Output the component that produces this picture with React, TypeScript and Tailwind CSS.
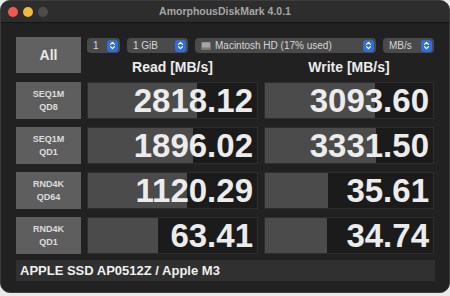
import React from 'react';

interface Result {
  label: [string, string];
  read: string;
  readFill: number;
  write: string;
  writeFill: number;
}

const results: Result[] = [
  { label: ['SEQ1M', 'QD8'], read: '2818.12', readFill: 109, write: '3093.60', writeFill: 110 },
  { label: ['SEQ1M', 'QD1'], read: '1896.02', readFill: 105, write: '3331.50', writeFill: 111 },
  { label: ['RND4K', 'QD64'], read: '1120.29', readFill: 99, write: '35.61', writeFill: 63 },
  { label: ['RND4K', 'QD1'], read: '63.41', readFill: 70, write: '34.74', writeFill: 62 },
];

const Chevrons: React.FC = () => (
  <span className="flex h-[12px] w-[11px] items-center justify-center rounded-[3px] bg-[#2f6ee0]">
    <svg width="7" height="9" viewBox="0 0 7 9" fill="none" stroke="#fff" strokeWidth="1.2" strokeLinecap="round" strokeLinejoin="round">
      <path d="M1.5 3.3 L3.5 1.3 L5.5 3.3" />
      <path d="M1.5 5.7 L3.5 7.7 L5.5 5.7" />
    </svg>
  </span>
);

const Select: React.FC<{ width: string; children: React.ReactNode }> = ({ width, children }) => (
  <div className={`flex h-[15px] ${width} items-center justify-between rounded-[4px] bg-[#4a4a4a] pl-[6px] pr-[2px] text-[10px] leading-none text-[#d6d6d6]`}>
    <span className="flex items-center gap-[4px]">{children}</span>
    <Chevrons />
  </div>
);

const DiskIcon: React.FC = () => (
  <svg width="10" height="10" viewBox="0 0 10 10">
    <rect x="0.5" y="1" width="9" height="8" rx="1" fill="#9a9a9a" />
    <rect x="0.5" y="6.5" width="9" height="2.5" rx="0.8" fill="#7a7a7a" />
    <path d="M2 2.5 V6 M3.5 2.5 V6 M5 2.5 V6 M6.5 2.5 V6 M8 2.5 V6" stroke="#b8b8b8" strokeWidth="0.6" />
  </svg>
);

const Cell: React.FC<{ value: string; fill: number }> = ({ value, fill }) => (
  <div className="relative h-[37px] border border-[#2e2e2e] bg-[#1b1b1b]">
    <div className="absolute inset-y-0 left-0 bg-[#4b4b4b]" style={{ width: fill }} />
    <div className="relative flex h-full items-center justify-end pr-[4px] text-[33px] font-bold leading-none text-[#ececec]">
      {value}
    </div>
  </div>
);

const App: React.FC = () => {
  return (
    <div className="h-[296px] w-[450px] bg-[#e9e9e9]" style={{ fontFamily: '"Liberation Sans", Arial, sans-serif' }}>
      <div className="flex h-[293px] w-[450px] flex-col overflow-hidden rounded-[10px] border border-[#3c3c3c] bg-[#212121]">
        {/* title bar */}
        <div className="relative flex h-[22px] shrink-0 items-center justify-center border-b border-[#151515] bg-[#2d2d2d]">
          <div className="absolute left-[7px] top-[6px] flex gap-[5px]">
            <span className="h-[10px] w-[10px] rounded-full bg-[#ee5a52]" />
            <span className="h-[10px] w-[10px] rounded-full bg-[#f2b93a]" />
            <span className="h-[10px] w-[10px] rounded-full bg-[#4c4c4c]" />
          </div>
          <span className="text-[10.5px] font-bold text-[#a5a5a5]">AmorphousDiskMark 4.0.1</span>
        </div>

        <div className="flex flex-col pl-[15px] pt-[14px]">
          {/* top controls */}
          <div className="flex gap-[6px]">
            <div className="flex h-[36px] w-[65px] items-center justify-center bg-[#616161] text-[14px] font-bold text-[#e8e8e8]">
              All
            </div>
            <div className="flex flex-col">
              <div className="flex gap-[7px] pt-[1px]">
                <Select width="w-[33px]">1</Select>
                <Select width="w-[61px]">1 GiB</Select>
                <Select width="w-[181px]"><DiskIcon />Macintosh HD (17% used)</Select>
                <Select width="w-[51px]">MB/s</Select>
              </div>
              <div className="mt-[7px] flex text-[14px] font-bold leading-none text-[#ececec]">
                <div className="w-[171px] text-center">Read [MB/s]</div>
                <div className="ml-[6px] w-[170px] text-center">Write [MB/s]</div>
              </div>
            </div>
          </div>

          {/* results */}
          <div className="mt-[8px] grid grid-cols-[65px_171px_170px] gap-x-[6px] gap-y-[8px]">
            {results.map((r, i) => (
              <React.Fragment key={i}>
                <div className="flex h-[37px] flex-col items-center justify-center bg-[#5e5e5e] text-[9px] font-bold leading-[13px] text-[#dcdcdc]">
                  <span>{r.label[0]}</span>
                  <span>{r.label[1]}</span>
                </div>
                <Cell value={r.read} fill={r.readFill} />
                <Cell value={r.write} fill={r.writeFill} />
              </React.Fragment>
            ))}
          </div>

          {/* footer */}
          <div className="mt-[6px] flex h-[21px] w-[419px] items-center bg-[#303030] pl-[4px] text-[13px] font-bold text-[#efefef]">
            APPLE SSD AP0512Z / Apple M3
          </div>
        </div>
      </div>
    </div>
  );
};

export default App;
